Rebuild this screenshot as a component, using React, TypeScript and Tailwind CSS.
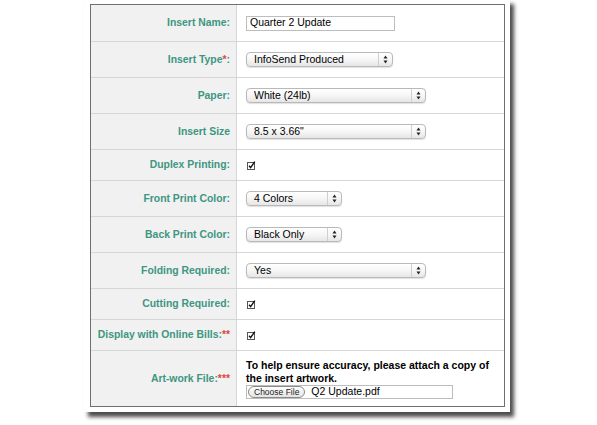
import React from "react"

const font = { fontFamily: '"Liberation Sans", Arial, sans-serif' }

function Label({ text, req, reqAfter }: { text: string; req?: string; reqAfter?: boolean }) {
  const base = text.replace(/:$/, "")
  const colon = text.endsWith(":") ? ":" : ""
  return (
    <div className="flex items-center justify-end bg-[#f1f1f1] border-r border-[#d6d6d6] pr-[6px] text-[10.4px] font-bold text-[#3d9682]">
      {reqAfter ? (
        <span>
          {base}
          {colon}
          <span className="text-[#e0453b]">{req}</span>
        </span>
      ) : (
        <span>
          {base}
          {req && <span className="text-[#e0453b]">{req}</span>}
          {colon}
        </span>
      )}
    </div>
  )
}

function Select({ value, width }: { value: string; width: string }) {
  return (
    <div
      className={`flex h-[15px] items-stretch rounded-[4px] border border-[#b9b9b9] bg-gradient-to-b from-white via-[#f6f6f6] to-[#e6e6e6] text-[10.5px] text-black shadow-[0_1px_1px_rgba(0,0,0,0.12)] ${width}`}
    >
      <span className="flex-1 pl-[7px] leading-[13px]">{value}</span>
      <span className="flex w-[14px] items-center justify-center border-l border-[#cfcfcf]">
        <svg width="5" height="9" viewBox="0 0 5 9">
          <path d="M2.5 0.5 L4.5 3.5 H0.5 Z" fill="#222" />
          <path d="M2.5 8.5 L4.5 5.5 H0.5 Z" fill="#222" />
        </svg>
      </span>
    </div>
  )
}

function Check() {
  return (
    <svg width="9" height="9" viewBox="0 0 9 9" className="ml-[1px]">
      <rect x="0.5" y="1.5" width="7" height="7" fill="#fff" stroke="#555" />
      <path d="M2 4.8 L3.6 6.6 L7.8 0.6" fill="none" stroke="#111" strokeWidth="1.4" />
    </svg>
  )
}

function Row({
  h,
  label,
  req,
  reqAfter,
  children,
  last,
}: {
  h: string
  label: string
  req?: string
  reqAfter?: boolean
  children: React.ReactNode
  last?: boolean
}) {
  return (
    <div className={`grid grid-cols-[146px_1fr] ${h} ${last ? "" : "border-b border-[#d6d6d6]"}`}>
      <Label text={label} req={req} reqAfter={reqAfter} />
      <div className="flex items-center pl-[9px]">{children}</div>
    </div>
  )
}

export default function App() {
  return (
    <div className="h-[425px] w-[597px] overflow-hidden bg-white" style={font}>
      <div className="ml-[84px] mt-[-1px] w-[426px] bg-white p-[5px] pl-[6px] shadow-[4px_5px_4px_rgba(0,0,0,0.7)]">
        <div className="border-[1.5px] border-[#6f6f6f]">
          <Row h="h-[37px]" label="Insert Name:">
            <div className="flex h-[15px] w-[149px] items-center border border-[#bdbdbd] bg-white pl-[3px] text-[10.5px] text-black">
              Quarter 2 Update
            </div>
          </Row>
          <Row h="h-[36px]" label="Insert Type:" req="*">
            <Select value="InfoSend Produced" width="w-[147px]" />
          </Row>
          <Row h="h-[36px]" label="Paper:">
            <Select value="White (24lb)" width="w-[180px]" />
          </Row>
          <Row h="h-[36px]" label="Insert Size">
            <Select value={'8.5 x 3.66"'} width="w-[180px]" />
          </Row>
          <Row h="h-[31px]" label="Duplex Printing:">
            <Check />
          </Row>
          <Row h="h-[36px]" label="Front Print Color:">
            <Select value="4 Colors" width="w-[96px]" />
          </Row>
          <Row h="h-[36px]" label="Back Print Color:">
            <Select value="Black Only" width="w-[96px]" />
          </Row>
          <Row h="h-[36px]" label="Folding Required:">
            <Select value="Yes" width="w-[180px]" />
          </Row>
          <Row h="h-[31px]" label="Cutting Required:">
            <Check />
          </Row>
          <Row h="h-[31px]" label="Display with Online Bills:" req="**" reqAfter>
            <Check />
          </Row>
          <Row h="h-[55px]" label="Art-work File:" req="***" reqAfter last>
            <div className="flex flex-col pt-[1px]">
              <div className="text-[10.5px] font-bold leading-[12.5px] text-black">
                To help ensure accuracy, please attach a copy of
                <br />
                the insert artwork.
              </div>
              <div className="mt-[1px] flex h-[14px] w-[207px] items-center border border-[#bdbdbd] bg-white">
                <span className="ml-[1px] flex h-[12px] items-center rounded-full border border-[#8a8a8a] bg-gradient-to-b from-white to-[#e4e4e4] px-[5px] text-[8.5px] text-[#222]">
                  Choose File
                </span>
                <span className="ml-[6px] text-[10.5px] text-black">Q2 Update.pdf</span>
              </div>
            </div>
          </Row>
        </div>
      </div>
    </div>
  )
}
